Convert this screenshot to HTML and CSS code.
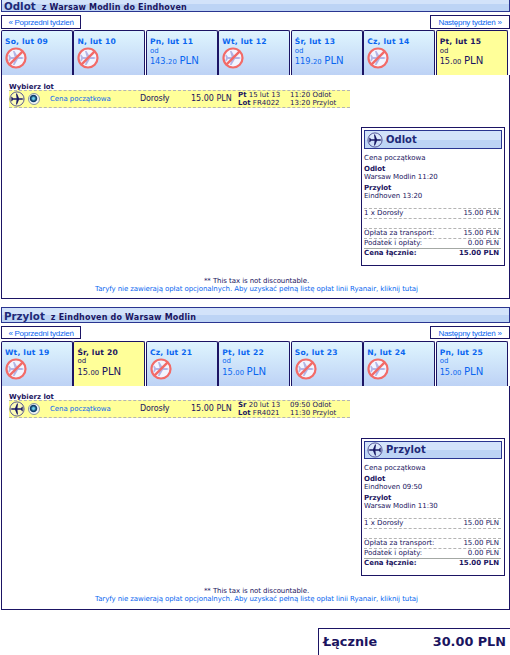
FILE: index.html
```
<!DOCTYPE html>
<html lang="pl">

<head>
  <meta charset="UTF-8" />
  <title>Wybierz lot</title>
  <link rel="stylesheet" href="styles.css">
</head>

<body>
  <svg class="sprite">
    <symbol id="plane" viewBox="0 0 16 16">
      <circle cx="8" cy="8" r="7.1" fill="#f4f6ff" fill-opacity=".3" stroke="#4a4a8e" stroke-width=".9" />
      <path d="M15 8L13 7.3H10L8 2.6H7L7.6 7.3H4L3 5.8H2L2.6 7.4L1 8L2.6 8.6L2 10.2H3L4 8.7h3.6L7 13.4h1L10 8.7H13z" fill="#1a1a66" />
    </symbol>
    <symbol id="noflight" viewBox="0 0 22 22">
      <circle cx="11" cy="11" r="9.3" fill="#f3f5ff" />
      <path d="M19 11l-2-1h-4L9.5 4H8l1.6 6H6L4.4 7.8H3.2L4 11l-.8 3.2h1.2L6 12h3.6L8 18h1.5l3.5-6h4z" fill="#b3b5e6" />
      <circle cx="11" cy="11" r="9.5" fill="none" stroke="#f26b68" stroke-width="2.2" />
      <path d="M4.6 17.4L17.4 4.6" stroke="#f26b68" stroke-width="2.4" />
    </symbol>
  </svg>

  <div class="flight outbound">
    <h3><b>Odlot</b> <span>z Warsaw Modlin do Eindhoven</span></h3>
    <div class="weeks">
      <a><span>« Poprzedni tydzień</span></a>
      <a><span>Następny tydzień »</span></a>
    </div>
    <div class="days">
      <div class="day"><b>So, lut 09</b><svg class="none"><use href="#noflight" /></svg></div>
      <div class="day"><b>N, lut 10</b><svg class="none"><use href="#noflight" /></svg></div>
      <div class="day"><b>Pn, lut 11</b><i>od</i><p>143.<small>20</small> <em>PLN</em></p></div>
      <div class="day"><b>Wt, lut 12</b><svg class="none"><use href="#noflight" /></svg></div>
      <div class="day"><b>Śr, lut 13</b><i>od</i><p>119.<small>20</small> <em>PLN</em></p></div>
      <div class="day"><b>Cz, lut 14</b><svg class="none"><use href="#noflight" /></svg></div>
      <div class="day active"><b>Pt, lut 15</b><i>od</i><p>15.<small>00</small> <em>PLN</em></p></div>
    </div>
    <div class="panel">
      <div class="choose">Wybierz lot</div>
      <div class="fare">
        <svg class="plane"><use href="#plane" /></svg>
        <span class="radio"></span>
        <a class="name">Cena początkowa</a>
        <span class="who">Dorosły</span>
        <span class="price">15.00 PLN</span>
        <div class="num"><div><b>Pt</b> 15 lut 13</div><div><b>Lot</b> FR4022</div></div>
        <div class="time"><div>11:20 Odlot</div><div>13:20 Przylot</div></div>
      </div>
      <div class="summary">
        <div class="title"><svg class="plane"><use href="#plane" /></svg><span>Odlot</span></div>
        <div class="line type">Cena początkowa</div>
        <div class="stop"><b>Odlot</b><span>Warsaw Modlin 11:20</span></div>
        <div class="stop"><b>Przylot</b><span>Eindhoven 13:20</span></div>
        <div class="row pax"><span>1 x Dorosły</span><span>15.00 PLN</span></div>
        <div class="row fee"><span>Opłata za transport:</span><span>15.00 PLN</span></div>
        <div class="row tax"><span>Podatek i opłaty:</span><span>0.00 PLN</span></div>
        <div class="row sum"><b>Cena łącznie:</b><b>15.00 PLN</b></div>
      </div>
      <div class="note">
        <div>** This tax is not discountable.</div>
        <a>Taryfy nie zawierają opłat opcjonalnych. Aby uzyskać pełną listę opłat linii Ryanair, kliknij tutaj</a>
      </div>
    </div>
  </div>

  <div class="flight inbound">
    <h3><b>Przylot</b> <span>z Eindhoven do Warsaw Modlin</span></h3>
    <div class="weeks">
      <a><span>« Poprzedni tydzień</span></a>
      <a><span>Następny tydzień »</span></a>
    </div>
    <div class="days">
      <div class="day"><b>Wt, lut 19</b><svg class="none"><use href="#noflight" /></svg></div>
      <div class="day active"><b>Śr, lut 20</b><i>od</i><p>15.<small>00</small> <em>PLN</em></p></div>
      <div class="day"><b>Cz, lut 21</b><svg class="none"><use href="#noflight" /></svg></div>
      <div class="day"><b>Pt, lut 22</b><i>od</i><p>15.<small>00</small> <em>PLN</em></p></div>
      <div class="day"><b>So, lut 23</b><svg class="none"><use href="#noflight" /></svg></div>
      <div class="day"><b>N, lut 24</b><svg class="none"><use href="#noflight" /></svg></div>
      <div class="day"><b>Pn, lut 25</b><i>od</i><p>15.<small>00</small> <em>PLN</em></p></div>
    </div>
    <div class="panel">
      <div class="choose">Wybierz lot</div>
      <div class="fare">
        <svg class="plane"><use href="#plane" /></svg>
        <span class="radio"></span>
        <a class="name">Cena początkowa</a>
        <span class="who">Dorosły</span>
        <span class="price">15.00 PLN</span>
        <div class="num"><div><b>Śr</b> 20 lut 13</div><div><b>Lot</b> FR4021</div></div>
        <div class="time"><div>09:50 Odlot</div><div>11:30 Przylot</div></div>
      </div>
      <div class="summary">
        <div class="title"><svg class="plane"><use href="#plane" /></svg><span>Przylot</span></div>
        <div class="line type">Cena początkowa</div>
        <div class="stop"><b>Odlot</b><span>Eindhoven 09:50</span></div>
        <div class="stop"><b>Przylot</b><span>Warsaw Modlin 11:30</span></div>
        <div class="row pax"><span>1 x Dorosły</span><span>15.00 PLN</span></div>
        <div class="row fee"><span>Opłata za transport:</span><span>15.00 PLN</span></div>
        <div class="row tax"><span>Podatek i opłaty:</span><span>0.00 PLN</span></div>
        <div class="row sum"><b>Cena łącznie:</b><b>15.00 PLN</b></div>
      </div>
      <div class="note">
        <div>** This tax is not discountable.</div>
        <a>Taryfy nie zawierają opłat opcjonalnych. Aby uzyskać pełną listę opłat linii Ryanair, kliknij tutaj</a>
      </div>
    </div>
  </div>

  <div class="total"><span>Łącznie</span><span>30.00 PLN</span></div>
</body>

</html>
```
FILE: styles.css
```
* {
  box-sizing: border-box;
}

body {
  margin: 0;
  width: 510px;
  height: 655px;
  overflow: hidden;
  background: #fff;
  font-family: Verdana, "DejaVu Sans", sans-serif;
  font-size: 7px;
  line-height: 8px;
  color: #1a1460;
}

a {
  color: #0a66f0;
}

.sprite {
  display: none;
}

.flight {
  height: 303px;
  margin: 0 0 8px 1px;
  display: flex;
  flex-direction: column;
}

.outbound {
  margin-top: -4px;
}

h3 {
  flex: none;
  display: flex;
  align-items: baseline;
  gap: 6px;
  height: 16px;
  margin: 0 0 3px;
  padding: 0 0 0 2px;
  border: 1px solid #2a3590;
  background: linear-gradient(#d3e3fa 0 50%, #bdd4f5 50%);
  font-size: 8px;
  line-height: 16px;
  letter-spacing: .19px;
}

.outbound h3 {
  line-height: 18px;
}

h3 b {
  font-size: 10.3px;
  letter-spacing: 0;
  color: #1f2a78;
}

.weeks {
  flex: none;
  display: flex;
  justify-content: space-between;
  height: 14px;
  margin-bottom: 1px;
}

.weeks a {
  width: 80px;
  height: 14px;
  border: 1px solid #1b1464;
  font: 8px/13px "Liberation Sans", Arial, sans-serif;
  letter-spacing: -.27px;
  text-align: center;
}

.inbound .weeks a {
  height: 13px;
}

.days {
  flex: none;
  display: grid;
  grid-template-columns: repeat(7, 72px);
  column-gap: .45px;
  height: 45px;
}

.day {
  display: flex;
  flex-direction: column;
  align-items: flex-start;
  padding: 6px 0 0 3px;
  border: 1px solid #1b1464;
  border-bottom: 0;
  border-radius: 2px 2px 0 0;
  background: linear-gradient(#dff5fe, #bdd2f5);
  color: #0a66f0;
}

.day b {
  font-size: 7.6px;
  line-height: 10px;
  letter-spacing: .2px;
}

.day i {
  font-style: normal;
}

.inbound .day i {
  margin-top: -1px;
}

.day p {
  margin: 0;
  font-size: 8.2px;
  line-height: 12px;
}

.inbound .day p {
  margin-top: 1px;
}

.day small {
  font-size: 6.8px;
}

.day em {
  font-size: 10.2px;
  font-style: normal;
}

.day.active {
  background: #ffff99;
  color: #1a1460;
}

.none {
  width: 22px;
  height: 22px;
}

.panel {
  flex: 1;
  display: flex;
  flex-direction: column;
  border: 1px solid #1b1464;
  border-top: 0;
}

.choose {
  height: 15px;
  padding: 8px 0 0 7px;
  line-height: 8px;
  font-weight: bold;
}

.inbound .choose {
  height: 14px;
  padding-top: 7px;
}

.fare {
  display: grid;
  grid-template-columns: 19px 22px 90px 51px 47px 52px 60px;
  align-items: center;
  width: 341px;
  height: 18px;
  margin-left: 7px;
  border-top: 1px dashed #b4b4b4;
  border-bottom: 1px dashed #b4b4b4;
  background: #ffff99;
}

.plane {
  width: 16px;
  height: 16px;
}

.inbound .plane {
  transform: scaleX(-1);
}

.radio {
  width: 12px;
  height: 12px;
  border: 1px solid #8a96a0;
  border-radius: 50%;
  background: radial-gradient(circle at 45% 45%, #6fd4ec 0 .8px, #10406e 2.6px 3.3px, #f0f4f7 4.2px);
}

.name {
  letter-spacing: -.06px;
}

.who,
.price {
  font-size: 8px;
}

.who {
  letter-spacing: -.12px;
}

.summary {
  align-self: flex-end;
  width: 144px;
  height: 139px;
  margin: 19px 4px 0 0;
  padding: 2px;
  border: 1px solid #1b1464;
}

.inbound .summary {
  margin-top: 20px;
  height: 138px;
}

.title {
  display: flex;
  align-items: center;
  gap: 3px;
  height: 19px;
  padding-left: 2px;
  border: 1px solid #2a3590;
  background: linear-gradient(#d3e3fa 0 50%, #bdd4f5 50%);
  font-size: 10px;
  font-weight: bold;
  color: #1f2a78;
}

.inbound .title {
  height: 18px;
}

.type {
  margin: 5px 0 3px;
}

.stop {
  display: flex;
  flex-direction: column;
  margin-bottom: 3px;
  letter-spacing: -.07px;
}

.row {
  display: flex;
  justify-content: space-between;
  width: 137px;
  height: 10px;
  padding-right: 2px;
  line-height: 9px;
  border-top: 1px dashed #b4b4b4;
}

.row.pax {
  height: 11px;
  margin: 8px 0 9px;
  border-bottom: 1px dashed #b4b4b4;
}

.row.sum {
  border-top: 1px solid #a4a8a4;
}

.note {
  margin: auto 0 5px;
  padding-left: 2px;
  text-align: center;
  letter-spacing: -.08px;
}

.inbound .note {
  margin-bottom: 6px;
}

.total {
  display: flex;
  justify-content: space-between;
  align-items: center;
  width: 192px;
  height: 28px;
  margin: 18px 0 0 318px;
  padding: 0 4px 2px;
  border: 1px solid #1b1464;
  border-width: 1px 0 0 1px;
  font-size: 12.8px;
  font-weight: bold;
}
```
